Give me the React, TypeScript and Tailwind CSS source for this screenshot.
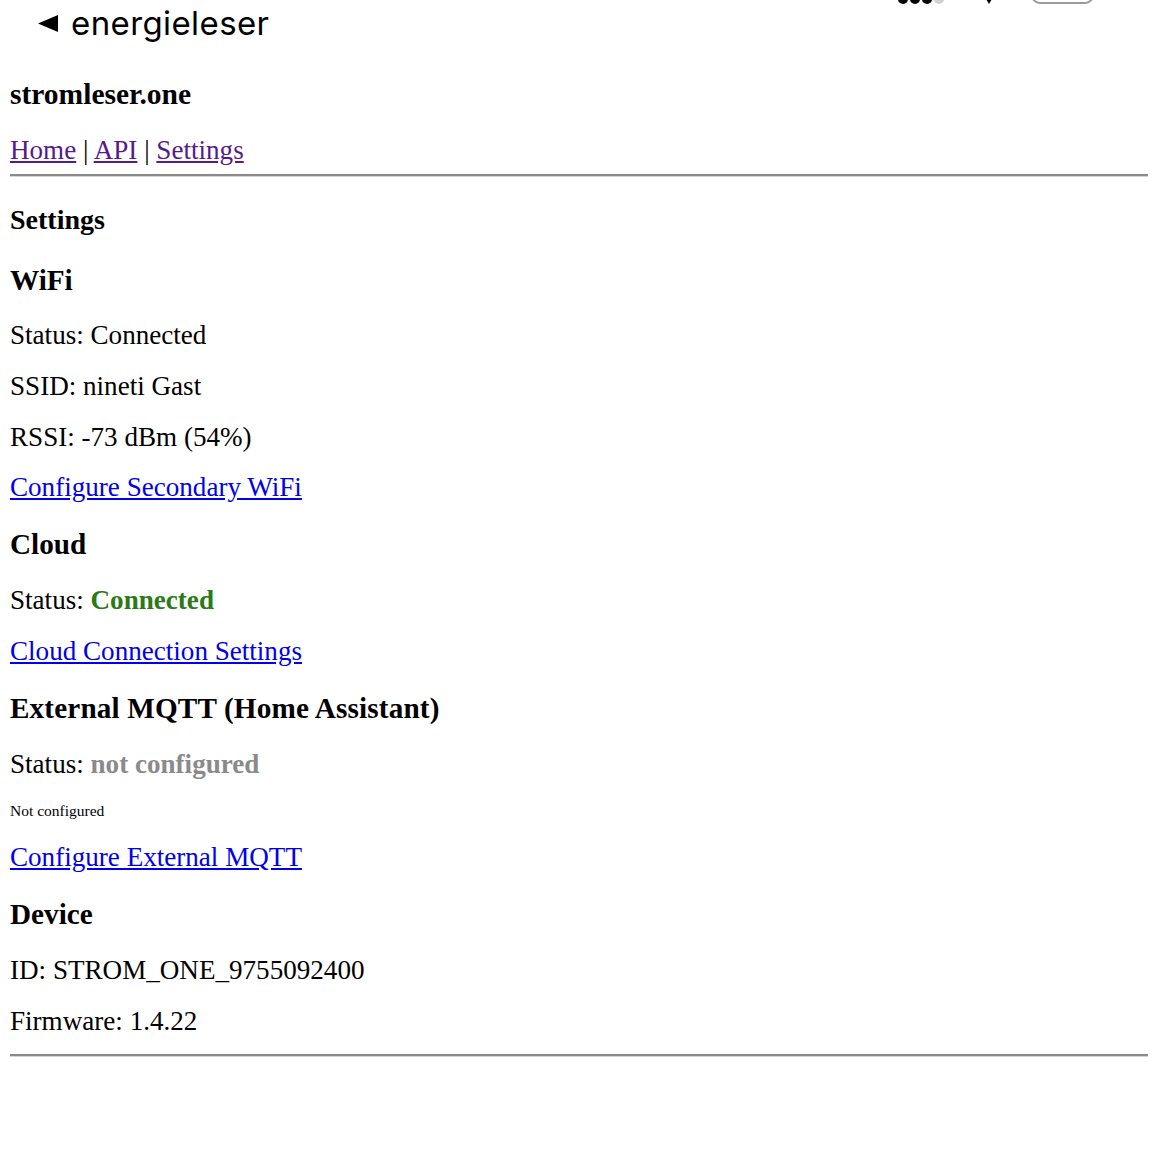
import React from 'react'

const serif = "font-['Liberation_Serif','Times_New_Roman',serif]"

function Line({ mt, children, className = '' }: { mt: string; children: React.ReactNode; className?: string }) {
  return <p className={`${mt} text-[27.1px] leading-[30px] text-black ${className}`}>{children}</p>
}

function Heading({ mt, children, size = 'text-[29.2px]' }: { mt: string; children: React.ReactNode; size?: string }) {
  return <h3 className={`${mt} ${size} leading-[32px] font-bold text-black`}>{children}</h3>
}

function Rule({ mt }: { mt: string }) {
  return <div className={`${mt} h-[3px] border-t-2 border-b border-t-[#8a8a8a] border-b-[#d4d4d4]`} />
}

function StatusBar() {
  // iOS status bar, only the bottom edge shows in the shot
  return (
    <div className="absolute top-0 left-0 w-full h-[4px] overflow-hidden">
      <div className="absolute bottom-0 left-[898px] flex gap-[2px]">
        <div className="w-[10px] h-[10px] rounded-full bg-black" />
        <div className="w-[10px] h-[10px] rounded-full bg-black" />
        <div className="w-[10px] h-[10px] rounded-full bg-black" />
        <div className="w-[10px] h-[10px] rounded-full bg-[#cfcfcf]" />
      </div>
      <svg className="absolute bottom-0 left-[983px]" width="12" height="10" viewBox="0 0 12 10">
        <path d="M0 0 L12 0 L6 10 Z" fill="#000" />
      </svg>
      <div className="absolute bottom-0 left-[1031px] w-[63px] h-[26px] rounded-[9px] border-2 border-[#9a9a9a]" />
    </div>
  )
}

export default function App() {
  return (
    <div className="relative bg-white min-h-[1159px]">
      <StatusBar />
      <div className="h-[46px] flex items-center pl-[37px] gap-[12px] font-['Inter',sans-serif] text-black">
        <svg className="shrink-0" width="22" height="19" viewBox="0 0 22 19">
          <path d="M1 9.5 L21 1 L21 18 Z" fill="#000" />
        </svg>
        <span className="text-[33px] leading-none tracking-[0.4px]">energieleser</span>
      </div>

      <div className={`px-[10px] ${serif}`}>
        <h3 className="mt-[32px] text-[29.5px] leading-[32px] font-bold">stromleser.one</h3>
        <Line mt="mt-[25px]">
          <a href="#" className="underline text-[#551a8b]">Home</a> | <a href="#" className="underline text-[#551a8b]">API</a> | <a href="#" className="underline text-[#551a8b]">Settings</a>
        </Line>
        <Rule mt="mt-[9px]" />

        <Heading mt="mt-[27px]" size="text-[28px]">Settings</Heading>
        <Heading mt="mt-[28px]">WiFi</Heading>
        <Line mt="mt-[24px]">Status: Connected</Line>
        <Line mt="mt-[21px]">SSID: nineti Gast</Line>
        <Line mt="mt-[21px]">RSSI: -73 dBm (54%)</Line>
        <Line mt="mt-[20px]">
          <a href="#" className="underline text-[#0000ee]">Configure Secondary WiFi</a>
        </Line>

        <Heading mt="mt-[26px]">Cloud</Heading>
        <Line mt="mt-[25px]">
          Status: <b className="text-[#2b7a16]">Connected</b>
        </Line>
        <Line mt="mt-[21px]">
          <a href="#" className="underline text-[#0000ee]">Cloud Connection Settings</a>
        </Line>

        <Heading mt="mt-[26px]">
          <span className="tracking-[0.15px]">External MQTT (Home Assistant)</span>
        </Heading>
        <Line mt="mt-[25px]">
          Status: <b className="text-[#8a8a8a]">not configured</b>
        </Line>
        <p className="mt-[23px] text-[15.5px] leading-[18px]">Not configured</p>
        <Line mt="mt-[22px]">
          <a href="#" className="underline text-[#0000ee]">Configure External MQTT</a>
        </Line>

        <Heading mt="mt-[26px]">Device</Heading>
        <Line mt="mt-[25px]">ID: STROM_ONE_9755092400</Line>
        <Line mt="mt-[21px]">Firmware: 1.4.22</Line>
        <Rule mt="mt-[18px]" />
      </div>
    </div>
  )
}
